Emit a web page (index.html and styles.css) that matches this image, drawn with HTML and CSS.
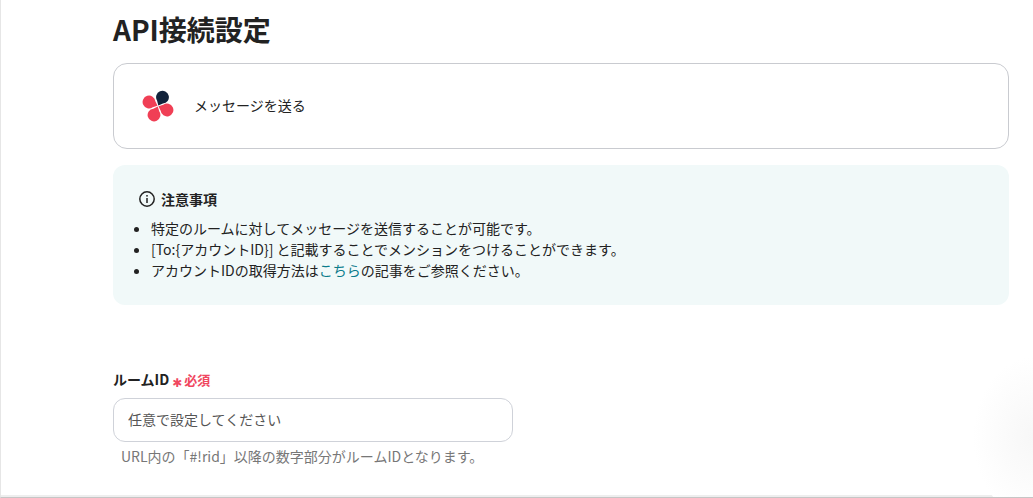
FILE: index.html
```html
<!DOCTYPE html>
<html lang="ja">
<head>
<meta charset="utf-8">
<title>API接続設定</title>
<link rel="stylesheet" href="styles.css">
</head>
<body>
<div class="page">
  <main class="content">
    <h1 class="title">API接続設定</h1>
    <div class="action-card">
      <svg class="logo" width="32" height="32" viewBox="0 0 32 32" aria-hidden="true">
        <path fill="#f03f55" transform="translate(7 12) rotate(159)" d="M-6.6 -6.6 L-1.6 -6.2 A6.4 6.4 0 1 1 -6.2 -1.6 Z"/>
        <path fill="#12233b" transform="translate(20.5 7.2) rotate(251.6)" d="M-6.6 -6.6 L-1.6 -6.2 A6.4 6.4 0 1 1 -6.2 -1.6 Z"/>
        <path fill="#f03f55" transform="translate(25 20) rotate(-21)" d="M-6.6 -6.6 L-1.6 -6.2 A6.4 6.4 0 1 1 -6.2 -1.6 Z"/>
        <path fill="#f03f55" transform="translate(12 25) rotate(69)" d="M-6.6 -6.6 L-1.6 -6.2 A6.4 6.4 0 1 1 -6.2 -1.6 Z"/>
      </svg>
      <span class="action-name">メッセージを送る</span>
    </div>
    <section class="notice">
      <div class="notice-head">
        <svg class="info" width="18" height="18" viewBox="0 0 18 18" aria-hidden="true">
          <circle cx="8" cy="9" r="7.2" fill="none" stroke="#222" stroke-width="1.5"/>
          <rect x="7.25" y="8" width="1.5" height="5" fill="#222"/>
          <rect x="7.25" y="5" width="1.5" height="1.6" fill="#222"/>
        </svg>
        <span>注意事項</span>
      </div>
      <ul class="notice-list">
        <li>特定のルームに対してメッセージを送信することが可能です。</li>
        <li>[To:{アカウントID}] と記載することでメンションをつけることができます。</li>
        <li>アカウントIDの取得方法は<a class="link" href="#">こちら</a>の記事をご参照ください。</li>
      </ul>
    </section>
    <div class="field">
      <label class="field-label">ルームID<span class="req"><span class="star">✱</span>必須</span></label>
      <input class="field-input" type="text" placeholder="任意で設定してください">
      <p class="hint">URL内の「#!rid」以降の数字部分がルームIDとなります。</p>
    </div>
  </main>
  <div class="glow"></div>
</div>
</body>
</html>
```
FILE: styles.css
```css
* { box-sizing: border-box; }
html, body { margin: 0; height: 100%; overflow: hidden; background: #fff; }
body {
  font-family: "Noto Sans CJK JP", "Noto Sans", sans-serif;
  color: #222;
}
.page {
  position: relative;
  height: 498px;
  border-left: 1px solid #e6e6e6;
  border-bottom: 1px solid #c6c6c6;
  box-shadow: inset 0 -2px 0 #eeeeee;
  overflow: hidden;
}
.content {
  display: flex;
  flex-direction: column;
  width: 1008px;
  padding-left: 112px;
}
.title {
  margin: 10px 0 0;
  font-size: 28px;
  line-height: 38px;
  font-weight: 700;
  color: #222;
}
.action-card {
  display: flex;
  align-items: center;
  gap: 20px;
  height: 86px;
  margin-top: 15px;
  padding-left: 28px;
  border: 1px solid #c9cbd0;
  border-radius: 14px;
  background: #fff;
}
.action-name { font-size: 14px; margin-bottom: 2px; }
.notice {
  height: 140px;
  margin-top: 16px;
  padding: 25px 26px;
  border-radius: 12px;
  background: #f1f9f9;
}
.notice-head {
  display: flex;
  align-items: center;
  gap: 4px;
  font-size: 14px;
  font-weight: 700;
  line-height: 18px;
}
.notice-list {
  margin: 10px 0 0;
  padding-left: 12px;
  font-size: 14px;
  line-height: 21px;
}
.link { color: #0b7c8c; text-decoration: none; }
.field { margin-top: 64px; display: flex; flex-direction: column; }
.field-label {
  font-size: 14px;
  font-weight: 700;
  line-height: 20px;
}
.req {
  margin-left: 3px;
  font-size: 13px;
  color: #f0475f;
}
.star {
  font-family: "DejaVu Sans", sans-serif;
  font-size: 12px;
  margin-right: 2px;
  vertical-align: -2px;
}
.field-input {
  width: 400px;
  height: 44px;
  margin-top: 5px;
  padding: 0 14px 2px;
  border: 1px solid #cfd2d9;
  border-radius: 12px;
  font: inherit;
  font-size: 14px;
  background: #fff;
}
.field-input::placeholder { color: #555; opacity: 1; }
.hint {
  margin: 4px 0 0 8px;
  font-size: 14px;
  line-height: 20px;
  color: #777;
}
.glow {
  position: absolute;
  right: -60px;
  bottom: -20px;
  width: 120px;
  height: 160px;
  border-radius: 50%;
  background: radial-gradient(closest-side, #f7f7f7, #fff);
}
```
